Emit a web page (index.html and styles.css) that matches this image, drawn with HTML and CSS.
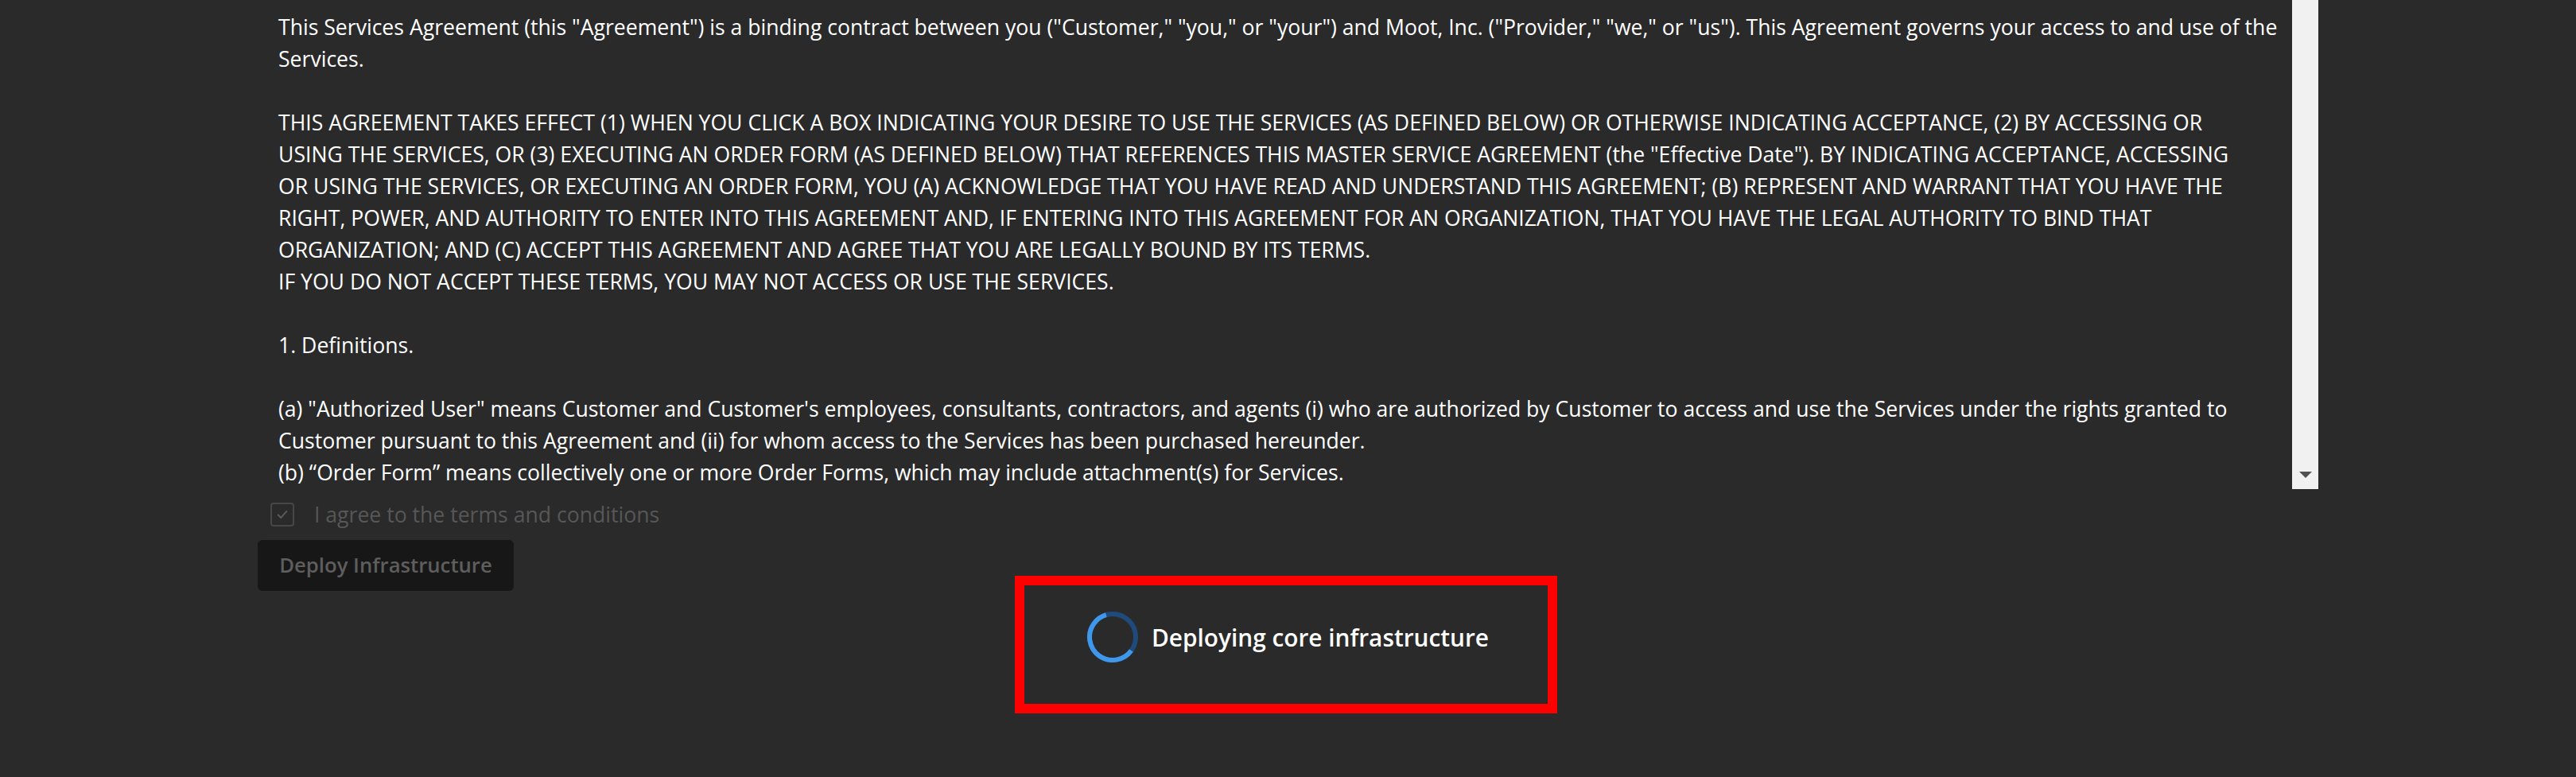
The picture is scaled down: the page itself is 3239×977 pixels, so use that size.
FILE: index.html
```html
<!DOCTYPE html>
<html lang="en">
<head>
<meta charset="utf-8">
<title>Deploy Infrastructure</title>
<link rel="stylesheet" href="styles.css">
</head>
<body>
<main class="page">
  <section class="terms">
    <div class="terms-text">
      <p>This Services Agreement (this "Agreement") is a binding contract between you ("Customer," "you," or "your") and Moot, Inc. ("Provider," "we," or "us"). This Agreement governs your access to and use of the<br>Services.</p>
      <p>THIS AGREEMENT TAKES EFFECT (1) WHEN YOU CLICK A BOX INDICATING YOUR DESIRE TO USE THE SERVICES (AS DEFINED BELOW) OR OTHERWISE INDICATING ACCEPTANCE, (2) BY ACCESSING OR<br>USING THE SERVICES, OR (3) EXECUTING AN ORDER FORM (AS DEFINED BELOW) THAT REFERENCES THIS MASTER SERVICE AGREEMENT (the "Effective Date"). BY INDICATING ACCEPTANCE, ACCESSING<br>OR USING THE SERVICES, OR EXECUTING AN ORDER FORM, YOU (A) ACKNOWLEDGE THAT YOU HAVE READ AND UNDERSTAND THIS AGREEMENT; (B) REPRESENT AND WARRANT THAT YOU HAVE THE<br>RIGHT, POWER, AND AUTHORITY TO ENTER INTO THIS AGREEMENT AND, IF ENTERING INTO THIS AGREEMENT FOR AN ORGANIZATION, THAT YOU HAVE THE LEGAL AUTHORITY TO BIND THAT<br>ORGANIZATION; AND (C) ACCEPT THIS AGREEMENT AND AGREE THAT YOU ARE LEGALLY BOUND BY ITS TERMS.<br>IF YOU DO NOT ACCEPT THESE TERMS, YOU MAY NOT ACCESS OR USE THE SERVICES.</p>
      <p>1. Definitions.</p>
      <p class="last">(a) "Authorized User" means Customer and Customer's employees, consultants, contractors, and agents (i) who are authorized by Customer to access and use the Services under the rights granted to<br>Customer pursuant to this Agreement and (ii) for whom access to the Services has been purchased hereunder.<br>(b) “Order Form” means collectively one or more Order Forms, which may include attachment(s) for Services.</p>
    </div>
    <div class="scrollbar"><span class="scroll-arrow"></span></div>
  </section>

  <label class="agree">
    <span class="checkbox">
      <svg viewBox="0 0 30 30" width="26" height="26" aria-hidden="true"><path d="M9 15.5l4 4 8-9" fill="none" stroke="#5a5a5a" stroke-width="2.4" stroke-linecap="round" stroke-linejoin="round"/></svg>
    </span>
    <span class="agree-text">I agree to the terms and conditions</span>
  </label>

  <div class="actions">
    <button class="deploy-btn" type="button" disabled>Deploy Infrastructure</button>
  </div>

  <div class="status-wrap">
    <div class="status">
      <svg class="spinner" viewBox="0 0 64 64" width="64" height="64" aria-hidden="true">
        <circle cx="32" cy="32" r="29" fill="none" stroke="#1f4b7c" stroke-width="6"/>
        <circle cx="32" cy="32" r="29" fill="none" stroke="#3f97ec" stroke-width="6" stroke-dasharray="110 200" transform="rotate(36 32 32)"/>
      </svg>
      <span class="status-text">Deploying core infrastructure</span>
    </div>
  </div>
</main>
</body>
</html>
```
FILE: styles.css
```css
* {
  box-sizing: border-box;
}

html, body {
  margin: 0;
  background: #2a2a2a;
}

body {
  font-family: "Open Sans", "Noto Sans", "Liberation Sans", sans-serif;
  color: #ffffff;
  min-height: 977px;
}

.page {
  width: 2591px;
  margin: 0 auto;
  display: flex;
  flex-direction: column;
}

.terms {
  display: flex;
  height: 615px;
}

.terms-text {
  flex: 1;
  overflow: hidden;
  padding: 14px 0 0 26px;
  font-size: 26.6px;
  line-height: 40px;
  white-space: nowrap;
}

.terms-text p {
  margin: 0 0 40px 0;
}

.terms-text p.last {
  margin-bottom: 0;
}

.scrollbar {
  width: 33px;
  flex: none;
  background: #f1f1f1;
  display: flex;
  align-items: flex-end;
  justify-content: center;
  padding-bottom: 14px;
}

.scroll-arrow {
  width: 0;
  height: 0;
  border-left: 8px solid transparent;
  border-right: 8px solid transparent;
  border-top: 8px solid #505050;
}

.agree {
  display: flex;
  align-items: center;
  height: 30px;
  margin: 17px 0 0 16px;
  gap: 25px;
}

.checkbox {
  width: 30px;
  height: 30px;
  flex: none;
  border: 2px solid #474747;
  border-radius: 4px;
  display: flex;
  align-items: center;
  justify-content: center;
}

.checkbox svg {
  flex: none;
}

.agree-text {
  font-size: 26.6px;
  line-height: 30px;
  color: #575757;
}

.actions {
  display: flex;
  margin-top: 17px;
}

.deploy-btn {
  width: 322px;
  height: 64px;
  padding: 0;
  border: none;
  border-radius: 6px;
  background: #171717;
  color: #5e5e5e;
  font-family: inherit;
  font-size: 25.7px;
  font-weight: 600;
  line-height: 64px;
  text-align: center;
}

.status-wrap {
  display: flex;
  justify-content: center;
  margin-top: 26px;
  margin-left: -324px;
  margin-right: -324px;
}

.status {
  position: relative;
  display: flex;
  align-items: center;
  gap: 17px;
}

.status::after {
  content: "";
  position: absolute;
  top: -45px;
  left: -91px;
  right: -86px;
  bottom: -64px;
  border: 12px solid #ff0000;
  pointer-events: none;
}

.spinner {
  flex: none;
  display: block;
}

.status-text {
  font-size: 29.8px;
  font-weight: 600;
  color: #ffffff;
}
```
